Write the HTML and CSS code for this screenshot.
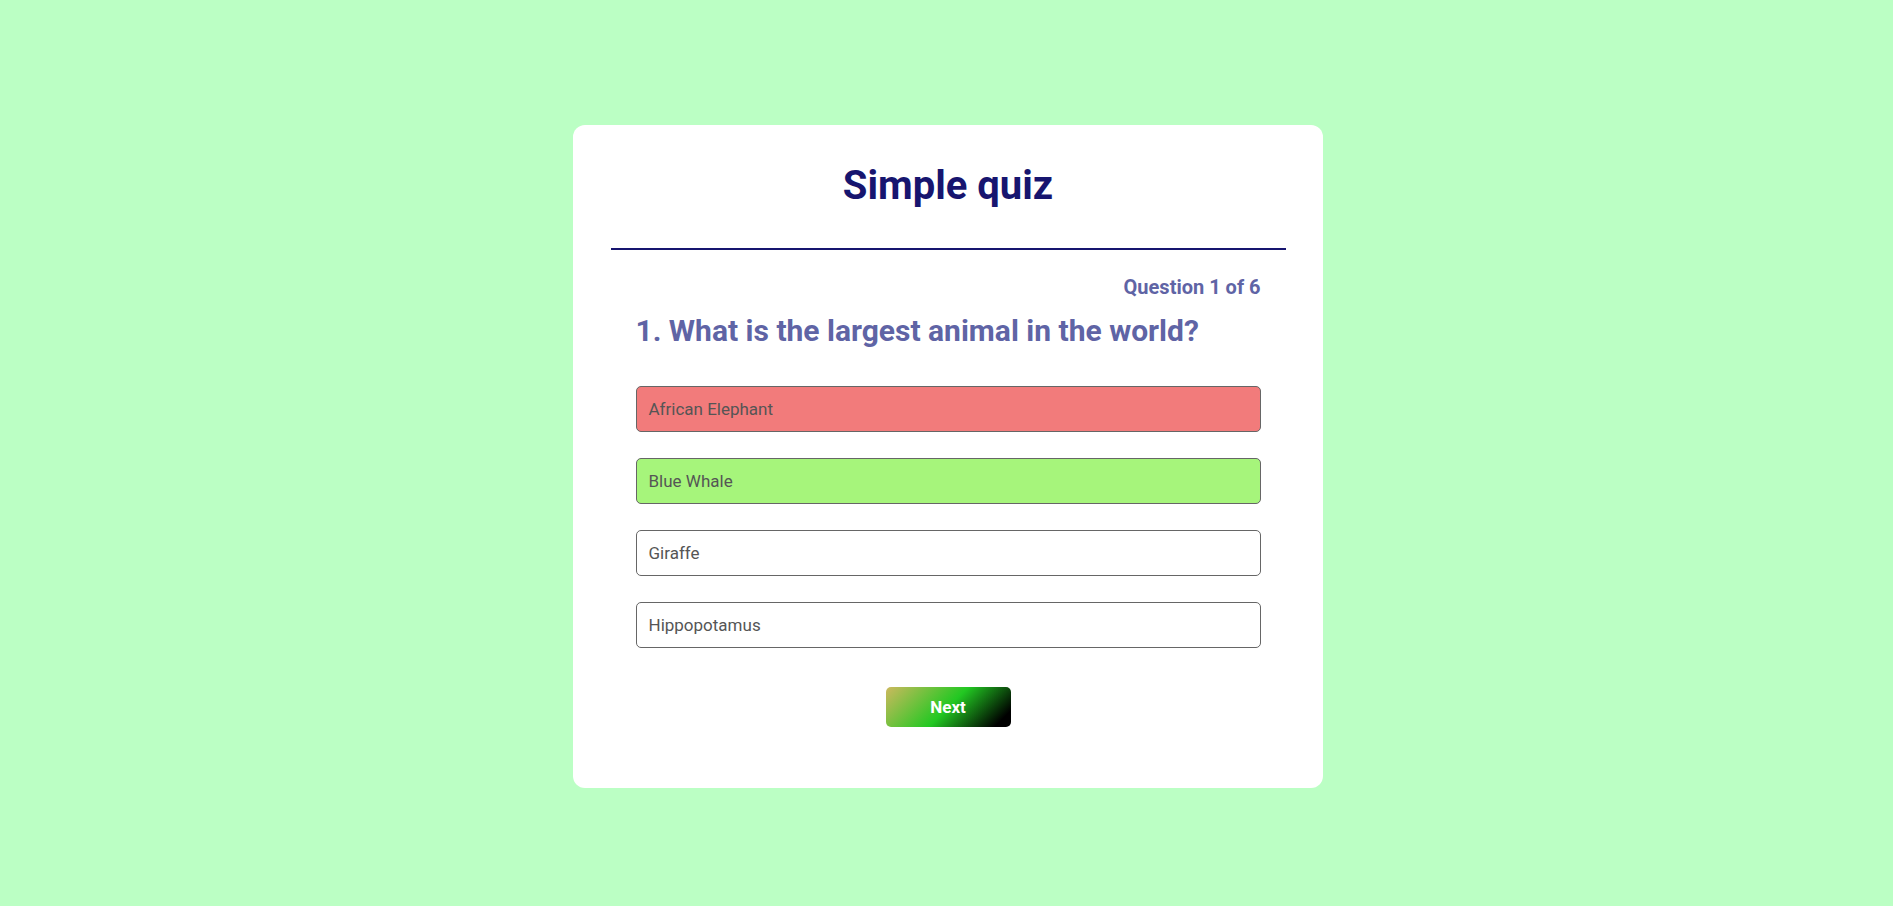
FILE: index.html
```html
<!DOCTYPE html>
<html lang="en">
<head>
<meta charset="UTF-8">
<title>Simple quiz</title>
<link rel="stylesheet" href="styles.css">
</head>
<body>
<main class="card">
  <h1 class="title">Simple quiz</h1>
  <hr class="divider">
  <section class="quiz">
    <div class="counter">Question 1 of 6</div>
    <h2 class="question">1. What is the largest animal in the world?</h2>
    <div class="options">
      <button class="option wrong">African Elephant</button>
      <button class="option right">Blue Whale</button>
      <button class="option">Giraffe</button>
      <button class="option">Hippopotamus</button>
    </div>
    <div class="actions">
      <button class="next">Next</button>
    </div>
  </section>
</main>
</body>
</html>
```
FILE: styles.css
```css
* { box-sizing: border-box; }
html, body { height: 100%; }
body {
  margin: 0;
  background: #bbffc4;
  font-family: Roboto, "Liberation Sans", Arial, sans-serif;
  display: flex;
  align-items: center;
  justify-content: center;
  padding: 7px 0 0 3px;
}
.card {
  width: 750px;
  background: #fff;
  border-radius: 12px;
  padding: 37px 0 61px;
}
.title {
  margin: 0 0 39px;
  text-align: center;
  font-size: 40px;
  font-weight: 700;
  line-height: normal;
  color: #17156f;
}
.divider {
  width: 90%;
  margin: 0 auto;
  border: 0;
  height: 2px;
  background: #17156f;
}
.quiz {
  width: 625px;
  margin: 0 auto;
}
.counter {
  margin-top: 25px;
  text-align: right;
  font-size: 20px;
  font-weight: 700;
  line-height: normal;
  color: #5f64a5;
}
.question {
  margin: 14px 0 38px;
  font-size: 30px;
  font-weight: 700;
  line-height: normal;
  color: #5f64a5;
}
.options {
  display: flex;
  flex-direction: column;
  gap: 26px;
}
.option {
  height: 46px;
  display: flex;
  align-items: center;
  padding: 0 12px;
  border: 1px solid #666;
  border-radius: 5px;
  background: #fff;
  font-family: inherit;
  font-size: 17px;
  font-weight: 400;
  color: #555;
  text-align: left;
}
.option.wrong { background: #f27b7b; }
.option.right { background: #a6f57b; }
.actions {
  display: flex;
  justify-content: center;
  margin-top: 39px;
}
.next {
  width: 125px;
  height: 40px;
  border: 0;
  border-radius: 5px;
  background: linear-gradient(135deg, #cdb95e 0%, #22c822 50%, #000 90%);
  color: #fff;
  font-family: inherit;
  font-size: 17px;
  font-weight: 700;
}
```
